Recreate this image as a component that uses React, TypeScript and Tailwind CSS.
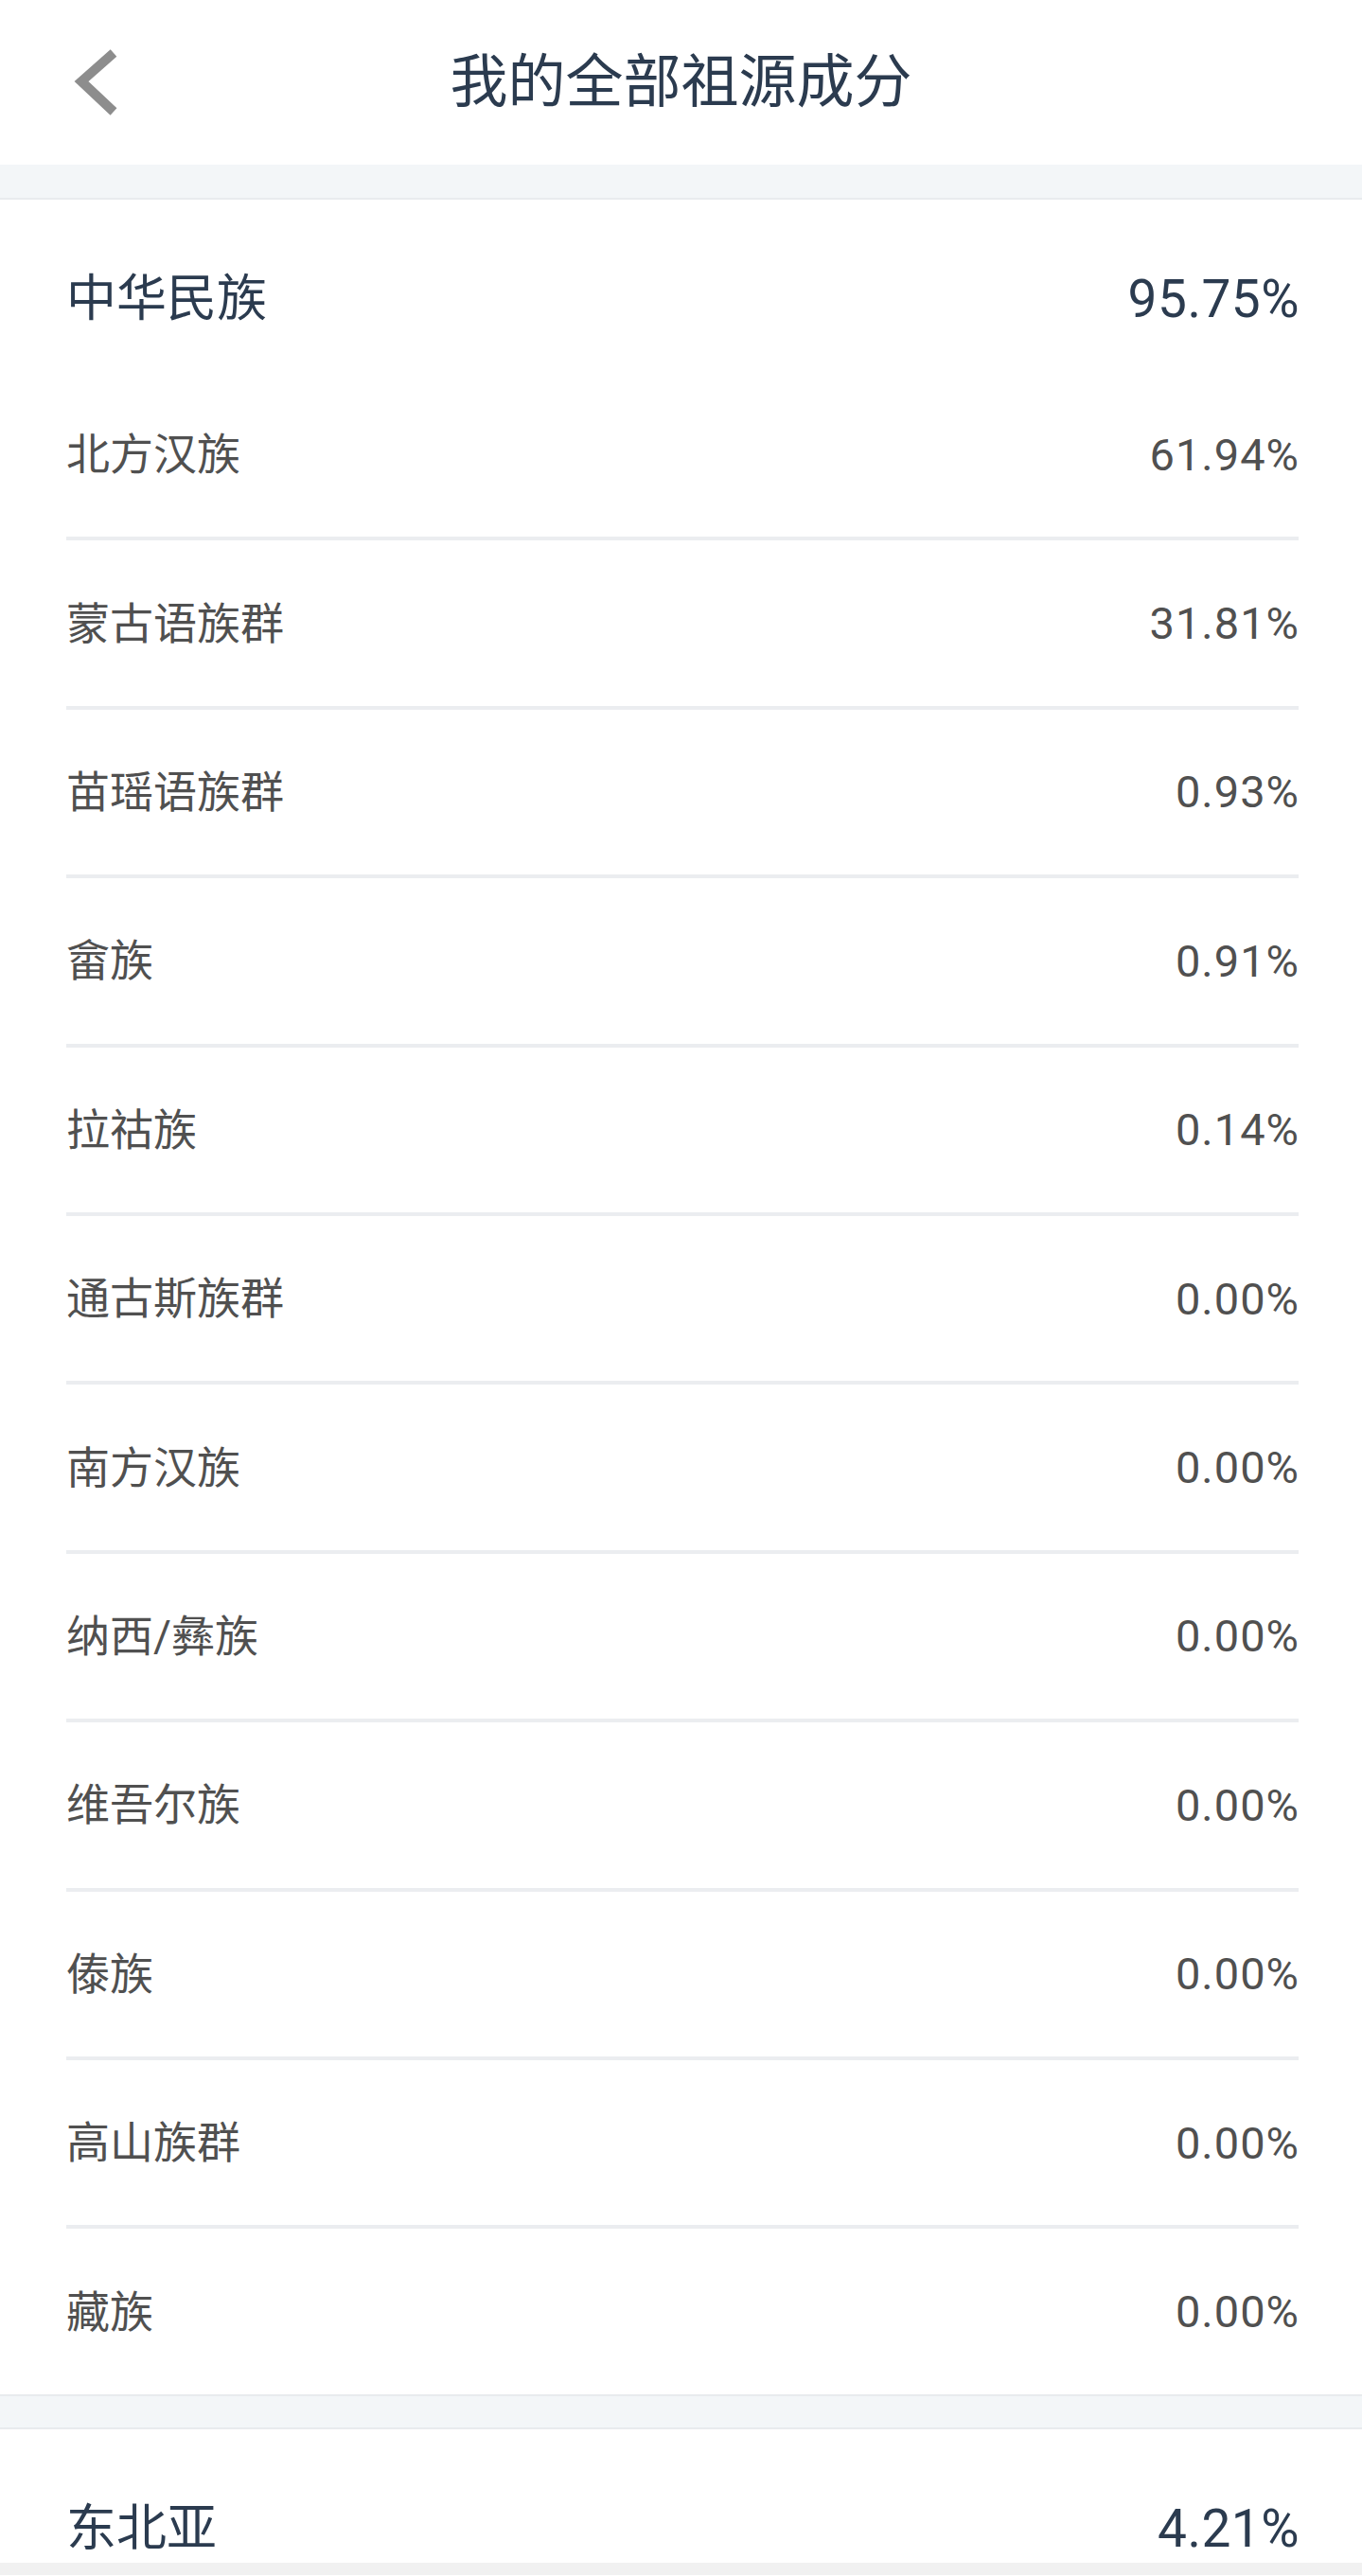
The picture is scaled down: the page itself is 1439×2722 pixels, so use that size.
import React from "react";

const rows: [string, string][] = [
  ["北方汉族", "61.94%"],
  ["蒙古语族群", "31.81%"],
  ["苗瑶语族群", "0.93%"],
  ["畲族", "0.91%"],
  ["拉祜族", "0.14%"],
  ["通古斯族群", "0.00%"],
  ["南方汉族", "0.00%"],
  ["纳西/彝族", "0.00%"],
  ["维吾尔族", "0.00%"],
  ["傣族", "0.00%"],
  ["高山族群", "0.00%"],
  ["藏族", "0.00%"],
];

const font = { fontFamily: "Roboto, 'Noto Sans CJK SC', sans-serif" };

function SectionHeader({ name, value }: { name: string; value: string }) {
  return (
    <div className="h-[182px] pt-[28px] pl-[70px] pr-[66px] flex items-center justify-between leading-none text-[#2b3b4f]">
      <span className="text-[53px]">{name}</span>
      <span className="text-[55px] tracking-[0.5px]">{value}</span>
    </div>
  );
}

export default function App() {
  return (
    <div className="w-[1439px] h-[2722px] overflow-hidden bg-white flex flex-col" style={font}>
      <header className="h-[174px] shrink-0 grid grid-cols-[1fr_auto_1fr] items-center">
        <div className="pl-[78px] flex items-center">
          <svg width="50" height="76" viewBox="0 0 50 76" fill="none">
            <polyline points="42,7 8,37 42,69" stroke="#8d8d8d" strokeWidth="10" strokeLinejoin="miter" strokeLinecap="butt" />
          </svg>
        </div>
        <h1 className="text-[61px] leading-none text-[#2b3b4f] font-normal">我的全部祖源成分</h1>
        <div />
      </header>
      <div className="h-[37px] shrink-0 bg-[#f3f6f8] border-b-2 border-[#e8ebee]" />
      <section className="shrink-0">
        <SectionHeader name="中华民族" value="95.75%" />
        {rows.map(([name, value], i) => (
          <div key={name}>
            <div
              className={
                i === rows.length - 1
                  ? "h-[175px] pl-[70px] pr-[66px] flex items-center justify-between leading-none text-[#505050]"
                  : "h-[174.4px] pl-[70px] pr-[66px] flex items-center justify-between leading-none text-[#505050]"
              }
            >
              <span className="text-[46px]">{name}</span>
              <span className="text-[47px] tracking-[1px]">{value}</span>
            </div>
            {i < rows.length - 1 && <div className="h-[4px] ml-[70px] mr-[67px] bg-[#ebedf0]" />}
          </div>
        ))}
      </section>
      <div className="h-[37px] shrink-0 bg-[#f3f6f8] border-y-2 border-[#e8ebee]" />
      <div className="h-[141px] shrink-0 overflow-hidden">
        <SectionHeader name="东北亚" value="4.21%" />
      </div>
      <div className="h-[13px] shrink-0 bg-[#f1f1f1]" />
    </div>
  );
}
